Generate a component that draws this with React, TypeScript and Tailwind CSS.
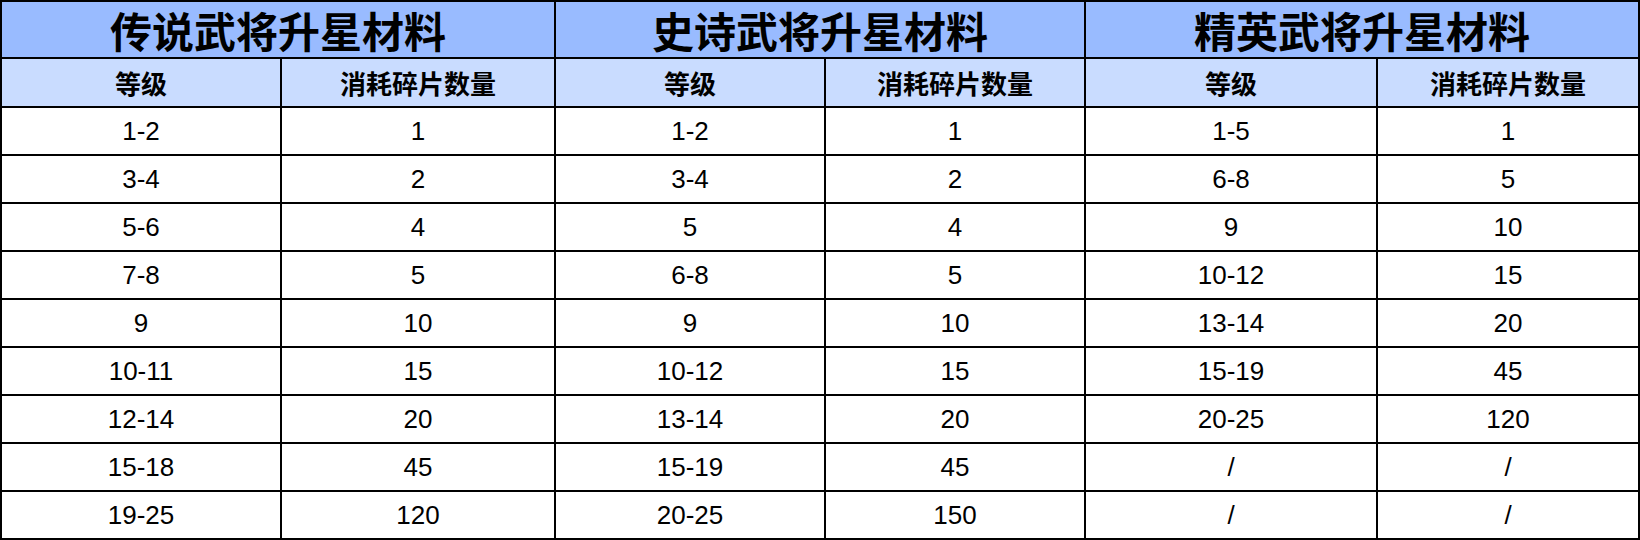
import React from 'react'

// 三张升星材料表，逐列给出
const groups = [
  {
    title: '传说武将升星材料',
    rows: [
      ['1-2', '1'],
      ['3-4', '2'],
      ['5-6', '4'],
      ['7-8', '5'],
      ['9', '10'],
      ['10-11', '15'],
      ['12-14', '20'],
      ['15-18', '45'],
      ['19-25', '120'],
    ],
  },
  {
    title: '史诗武将升星材料',
    rows: [
      ['1-2', '1'],
      ['3-4', '2'],
      ['5', '4'],
      ['6-8', '5'],
      ['9', '10'],
      ['10-12', '15'],
      ['13-14', '20'],
      ['15-19', '45'],
      ['20-25', '150'],
    ],
  },
  {
    title: '精英武将升星材料',
    rows: [
      ['1-5', '1'],
      ['6-8', '5'],
      ['9', '10'],
      ['10-12', '15'],
      ['13-14', '20'],
      ['15-19', '45'],
      ['20-25', '120'],
      ['/', '/'],
      ['/', '/'],
    ],
  },
]

const cjk = "font-['Noto_Sans_CJK_SC',_'Noto_Sans',_sans-serif]"

export default function App() {
  return (
    <div className="w-[1640px] h-[540px] bg-white">
      <div className="grid grid-cols-[278px_272px_268px_258px_290px_260px] grid-rows-[55px_47px_repeat(9,46px)] gap-[2px] p-[2px] bg-black">
        {groups.map((g) => (
          <div
            key={g.title}
            className={`col-span-2 flex items-center justify-center bg-[#99bbff] text-[42px] font-bold leading-none text-black ${cjk}`}
          >
            {g.title}
          </div>
        ))}
        {groups.map((g) => (
          <React.Fragment key={g.title + '-h'}>
            <div className={`flex items-center justify-center bg-[#c9dcff] text-[26px] font-bold leading-none text-black ${cjk}`}>
              等级
            </div>
            <div className={`flex items-center justify-center bg-[#c9dcff] text-[26px] font-bold leading-none text-black ${cjk}`}>
              消耗碎片数量
            </div>
          </React.Fragment>
        ))}
        {groups[0].rows.map((_, i) =>
          groups.map((g) => (
            <React.Fragment key={g.title + i}>
              <div className="flex items-center justify-center bg-white font-['Liberation_Sans',_Arial,_sans-serif] text-[26px] leading-none text-black">
                {g.rows[i][0]}
              </div>
              <div className="flex items-center justify-center bg-white font-['Liberation_Sans',_Arial,_sans-serif] text-[26px] leading-none text-black">
                {g.rows[i][1]}
              </div>
            </React.Fragment>
          ))
        )}
      </div>
    </div>
  )
}
